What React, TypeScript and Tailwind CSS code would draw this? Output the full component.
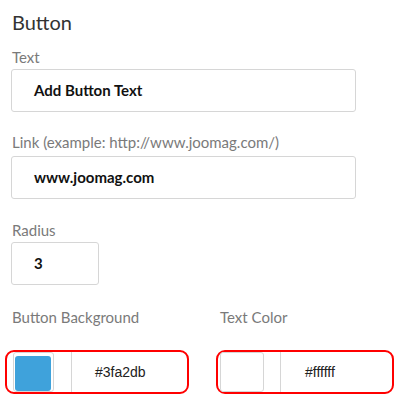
import React from "react";

const Label = ({ children, className = "" }: { children: React.ReactNode; className?: string }) => (
  <div className={`text-[15px] leading-[17px] text-[#7a7a7a] ${className}`}>{children}</div>
);

const Field = ({ value, className = "" }: { value: string; className?: string }) => (
  <div
    className={`flex h-[43px] items-center rounded-[3px] border border-[#d6d6d6] bg-white pl-[22px] text-[15px] font-bold text-[#111] ${className}`}
  >
    {value}
  </div>
);

export default function App() {
  return (
    <div
      className="h-[404px] w-[410px] overflow-hidden bg-white px-[11px] pt-[10px]"
      style={{ fontFamily: "Lato, 'Open Sans', sans-serif" }}
    >
      <div className="h-[24px] pl-[1px] text-[20px] leading-[24px] text-[#333]">Button</div>

      <Label className="mt-[15px] pl-[1px]">Text</Label>
      <Field value="Add Button Text" className="mt-[3px] w-[345px]" />

      <Label className="mt-[22px] pl-[1px]">Link (example: http://www.joomag.com/)</Label>
      <Field value="www.joomag.com" className="mt-[5px] w-[345px]" />

      <Label className="mt-[23px] pl-[1px]">Radius</Label>
      <Field value="3" className="mt-[3px] w-[88px]" />

      <div className="-ml-[6px] mt-[24px] flex gap-[27px]">
        <div className="w-[184px]">
          <Label className="pl-[7px]">Button Background</Label>
          <div className="mt-[24px] flex h-[44px] items-center rounded-[9px] border-2 border-[#ff0000] pl-[6px]">
            <div className="flex h-[40px] w-[41px] items-start rounded-[3px] border border-[#d6d6d6] pl-[1px] pt-[3px]">
              <div className="h-[35px] w-[36px] rounded-[3px] bg-[#3fa2db]" />
            </div>
            <div
              className="ml-[17px] flex h-[40px] flex-1 items-center border-l border-[#d6d6d6] pl-[23px] text-[14px] text-[#222]"
              style={{ fontFamily: "'Liberation Sans', Arial, sans-serif" }}
            >
              #3fa2db
            </div>
          </div>
        </div>
        <div className="w-[178px]">
          <Label className="pl-[4px]">Text Color</Label>
          <div className="mt-[24px] flex h-[44px] items-center rounded-[9px] border-2 border-[#ff0000] pl-[2px]">
            <div className="h-[40px] w-[44px] rounded-[3px] border border-[#d6d6d6] bg-white" />
            <div
              className="ml-[16px] flex h-[40px] flex-1 items-center border-l border-[#d6d6d6] pl-[24px] text-[14px] text-[#222]"
              style={{ fontFamily: "'Liberation Sans', Arial, sans-serif" }}
            >
              #ffffff
            </div>
          </div>
        </div>
      </div>
    </div>
  );
}
